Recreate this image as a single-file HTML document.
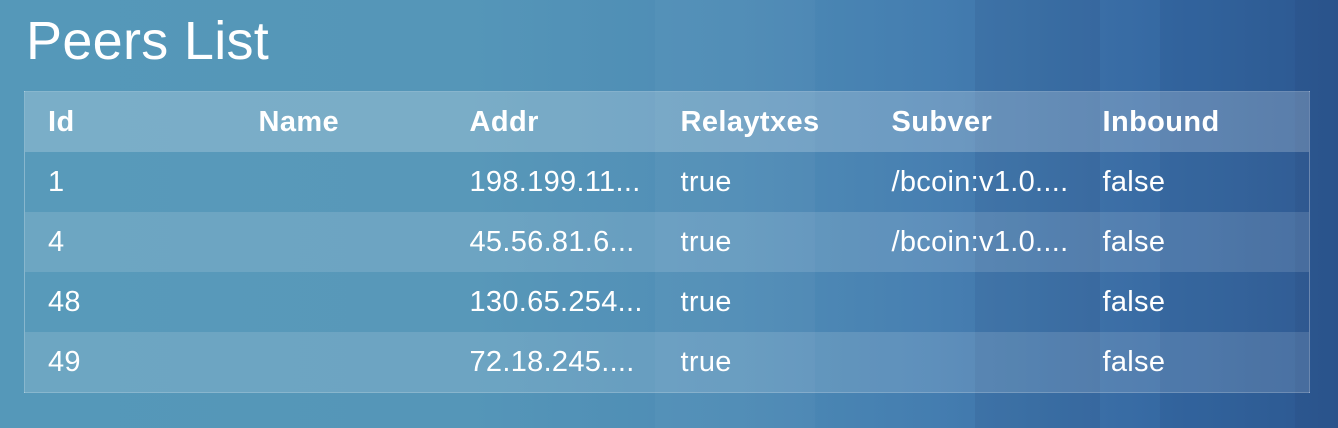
<!DOCTYPE html>
<html><head><meta charset="utf-8"><style>
html,body{margin:0;padding:0;}
body{width:1338px;height:428px;overflow:hidden;position:relative;font-family:"Liberation Sans",sans-serif;color:#fff;
background:linear-gradient(90deg,#5598b9 0%,#5596b8 35%,#4d8bb5 55%,#447db0 70%,#3a6ea6 82%,#3366a0 90%,#2e5b94 100%);}
.band{position:absolute;top:0;height:428px;}
h1{position:absolute;left:26px;top:10px;margin:0;font-weight:normal;font-size:54px;letter-spacing:0.3px;}
table{position:absolute;left:24px;top:91px;width:1286px;border-collapse:collapse;border:1px solid rgba(255,255,255,0.3);table-layout:fixed;}
td,th{height:60px;padding:0 0 0 23px;text-align:left;font-size:29px;white-space:nowrap;overflow:hidden;letter-spacing:0.3px;}
th{font-weight:bold;letter-spacing:0.4px;}
tr.h{background:rgba(255,255,255,0.22);}
tr.a{background:rgba(255,255,255,0.02);}
tr.b{background:rgba(255,255,255,0.14);}
</style></head><body>
<div class="band" style="left:655px;width:160px;background:rgba(255,255,255,0.03)"></div>
<div class="band" style="left:975px;width:125px;background:rgba(0,0,40,0.05)"></div>
<div class="band" style="left:1160px;width:135px;background:rgba(0,0,40,0.04)"></div>
<div class="band" style="left:1295px;width:43px;background:rgba(0,0,40,0.08)"></div>
<h1>Peers List</h1>
<table>
<colgroup><col style="width:211px"><col style="width:211px"><col style="width:211px"><col style="width:211px"><col style="width:211px"><col></colgroup>
<tr class="h"><th>Id</th><th>Name</th><th>Addr</th><th>Relaytxes</th><th>Subver</th><th>Inbound</th></tr>
<tr class="a"><td>1</td><td></td><td>198.199.11...</td><td>true</td><td>/bcoin:v1.0....</td><td>false</td></tr>
<tr class="b"><td>4</td><td></td><td>45.56.81.6...</td><td>true</td><td>/bcoin:v1.0....</td><td>false</td></tr>
<tr class="a"><td>48</td><td></td><td>130.65.254...</td><td>true</td><td></td><td>false</td></tr>
<tr class="b"><td>49</td><td></td><td>72.18.245....</td><td>true</td><td></td><td>false</td></tr>
</table>
</body></html>
